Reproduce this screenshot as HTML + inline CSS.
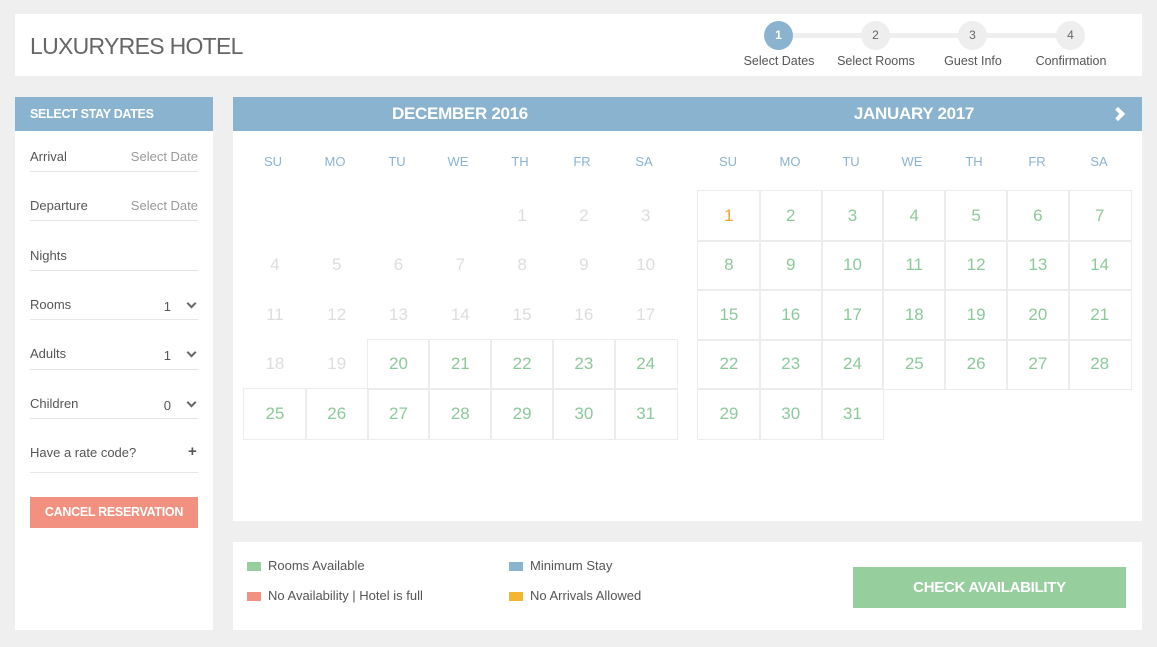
<!DOCTYPE html>
<html><head><meta charset="utf-8"><style>
*{box-sizing:border-box;margin:0;padding:0}
body{width:1157px;height:647px;background:#efefef;font-family:"Liberation Sans",sans-serif;position:relative;overflow:hidden;color:#555}
.box{position:absolute;background:#fff}
.abs{position:absolute}
.logo{left:30px;top:33px;font-size:23px;color:#666;letter-spacing:-0.7px}
.step{position:absolute;width:29px;height:29px;border-radius:50%;background:#eee;color:#666;font-size:12px;text-align:center;line-height:29px;top:21px}
.sl{position:absolute;top:54px;font-size:12.5px;color:#555;width:110px;text-align:center}
.bar{background:#8ab3cf;color:#fff;font-weight:bold}
.row{position:absolute;left:30px;width:168px;height:1px;background:#e5e5e5}
.lab{position:absolute;left:30px;font-size:13px;color:#555}
.val{position:absolute;right:959px;font-size:13px;color:#999;text-align:right}
.chev{position:absolute;left:188px;width:7px;height:7px;border-right:2px solid #666;border-bottom:2px solid #666;transform:rotate(45deg)}
.dh{position:absolute;top:154px;font-size:13px;color:#8ab3cf;width:62px;text-align:center}
.grid{position:absolute;display:grid;grid-template-columns:repeat(7,61.8px);grid-auto-rows:49.5px}
.grid div{display:flex;align-items:center;justify-content:center;font-size:17px;color:#ddd}
.grid div.a{color:#8cc99a;outline:1px solid #ececec;outline-offset:-0.5px}
.grid div.o{color:#f0a030}
.lg{position:absolute;font-size:13px;color:#555}
.lg i{position:absolute;left:-21px;top:4px;width:14px;height:9px}
</style></head><body>
<div class="box" style="left:15px;top:14px;width:1127px;height:62px"></div>
<div class="abs logo">LUXURYRES HOTEL</div>
<div class="abs" style="left:780px;top:33px;width:290px;height:5px;background:#eee"></div>
<div class="step" style="left:764px;background:#8ab3cf;color:#fff;font-weight:bold">1</div>
<div class="step" style="left:861px">2</div>
<div class="step" style="left:958px">3</div>
<div class="step" style="left:1056px">4</div>
<div class="sl" style="left:724px">Select Dates</div>
<div class="sl" style="left:821px">Select Rooms</div>
<div class="sl" style="left:918px">Guest Info</div>
<div class="sl" style="left:1016px">Confirmation</div>

<div class="box" style="left:15px;top:97px;width:198px;height:533px"></div>
<div class="abs bar" style="left:15px;top:97px;width:198px;height:34px;font-size:12.5px;line-height:34px;padding-left:15px;letter-spacing:-0.3px">SELECT STAY DATES</div>
<div class="lab" style="top:149px">Arrival</div><div class="val" style="top:149px">Select Date</div><div class="row" style="top:171px"></div>
<div class="lab" style="top:198px">Departure</div><div class="val" style="top:198px">Select Date</div><div class="row" style="top:220px"></div>
<div class="lab" style="top:248px">Nights</div><div class="row" style="top:270px"></div>
<div class="lab" style="top:297px">Rooms</div><div class="val" style="top:299px;right:986px;color:#555">1</div><div class="chev" style="top:300px"></div><div class="row" style="top:319px"></div>
<div class="lab" style="top:346px">Adults</div><div class="val" style="top:348px;right:986px;color:#555">1</div><div class="chev" style="top:349px"></div><div class="row" style="top:369px"></div>
<div class="lab" style="top:396px">Children</div><div class="val" style="top:398px;right:986px;color:#555">0</div><div class="chev" style="top:399px"></div><div class="row" style="top:418px"></div>
<div class="lab" style="top:445px">Have a rate code?</div><div class="abs" style="left:188px;top:443px;font-size:15px;font-weight:bold;color:#555">+</div><div class="row" style="top:472px"></div>
<div class="abs" style="left:30px;top:497px;width:168px;height:31px;background:#f2917f;color:#fff;font-weight:bold;font-size:12.5px;text-align:center;line-height:31px;letter-spacing:-0.3px">CANCEL RESERVATION</div>

<div class="box" style="left:233px;top:97px;width:909px;height:424px"></div>
<div class="abs bar" style="left:233px;top:97px;width:909px;height:34px"></div>
<div class="abs" style="left:244px;top:104px;width:432px;text-align:center;color:#fff;font-weight:bold;font-size:17px;letter-spacing:-0.3px">DECEMBER 2016</div>
<div class="abs" style="left:698px;top:104px;width:432px;text-align:center;color:#fff;font-weight:bold;font-size:17px;letter-spacing:-0.3px">JANUARY 2017</div>
<div class="abs" style="left:1113px;top:109px;width:10px;height:10px;border-right:4px solid #fff;border-bottom:4px solid #fff;transform:rotate(-45deg)"></div>

<div class="dh" style="left:242px">SU</div><div class="dh" style="left:304px">MO</div><div class="dh" style="left:366px">TU</div><div class="dh" style="left:427px">WE</div><div class="dh" style="left:489px">TH</div><div class="dh" style="left:551px">FR</div><div class="dh" style="left:613px">SA</div>
<div class="dh" style="left:697px">SU</div><div class="dh" style="left:759px">MO</div><div class="dh" style="left:820px">TU</div><div class="dh" style="left:881px">WE</div><div class="dh" style="left:943px">TH</div><div class="dh" style="left:1006px">FR</div><div class="dh" style="left:1068px">SA</div>

<div class="grid" style="left:244px;top:191px">
<div></div><div></div><div></div><div></div><div>1</div><div>2</div><div>3</div>
<div>4</div><div>5</div><div>6</div><div>7</div><div>8</div><div>9</div><div>10</div>
<div>11</div><div>12</div><div>13</div><div>14</div><div>15</div><div>16</div><div>17</div>
<div>18</div><div>19</div><div class="a">20</div><div class="a">21</div><div class="a">22</div><div class="a">23</div><div class="a">24</div>
<div class="a">25</div><div class="a">26</div><div class="a">27</div><div class="a">28</div><div class="a">29</div><div class="a">30</div><div class="a">31</div>
</div>
<div class="grid" style="left:698px;top:191px">
<div class="a o">1</div><div class="a">2</div><div class="a">3</div><div class="a">4</div><div class="a">5</div><div class="a">6</div><div class="a">7</div>
<div class="a">8</div><div class="a">9</div><div class="a">10</div><div class="a">11</div><div class="a">12</div><div class="a">13</div><div class="a">14</div>
<div class="a">15</div><div class="a">16</div><div class="a">17</div><div class="a">18</div><div class="a">19</div><div class="a">20</div><div class="a">21</div>
<div class="a">22</div><div class="a">23</div><div class="a">24</div><div class="a">25</div><div class="a">26</div><div class="a">27</div><div class="a">28</div>
<div class="a">29</div><div class="a">30</div><div class="a">31</div>
</div>

<div class="box" style="left:233px;top:542px;width:909px;height:88px"></div>
<div class="lg" style="left:268px;top:558px"><i style="background:#96cf9d"></i>Rooms Available</div>
<div class="lg" style="left:268px;top:588px"><i style="background:#f2917f"></i>No Availability | Hotel is full</div>
<div class="lg" style="left:530px;top:558px"><i style="background:#8ab3cf"></i>Minimum Stay</div>
<div class="lg" style="left:530px;top:588px"><i style="background:#f2b632"></i>No Arrivals Allowed</div>
<div class="abs" style="left:853px;top:567px;width:273px;height:41px;background:#96cf9d;color:#fff;font-weight:bold;font-size:15px;text-align:center;line-height:42px;letter-spacing:-0.3px">CHECK AVAILABILITY</div>
</body></html>
